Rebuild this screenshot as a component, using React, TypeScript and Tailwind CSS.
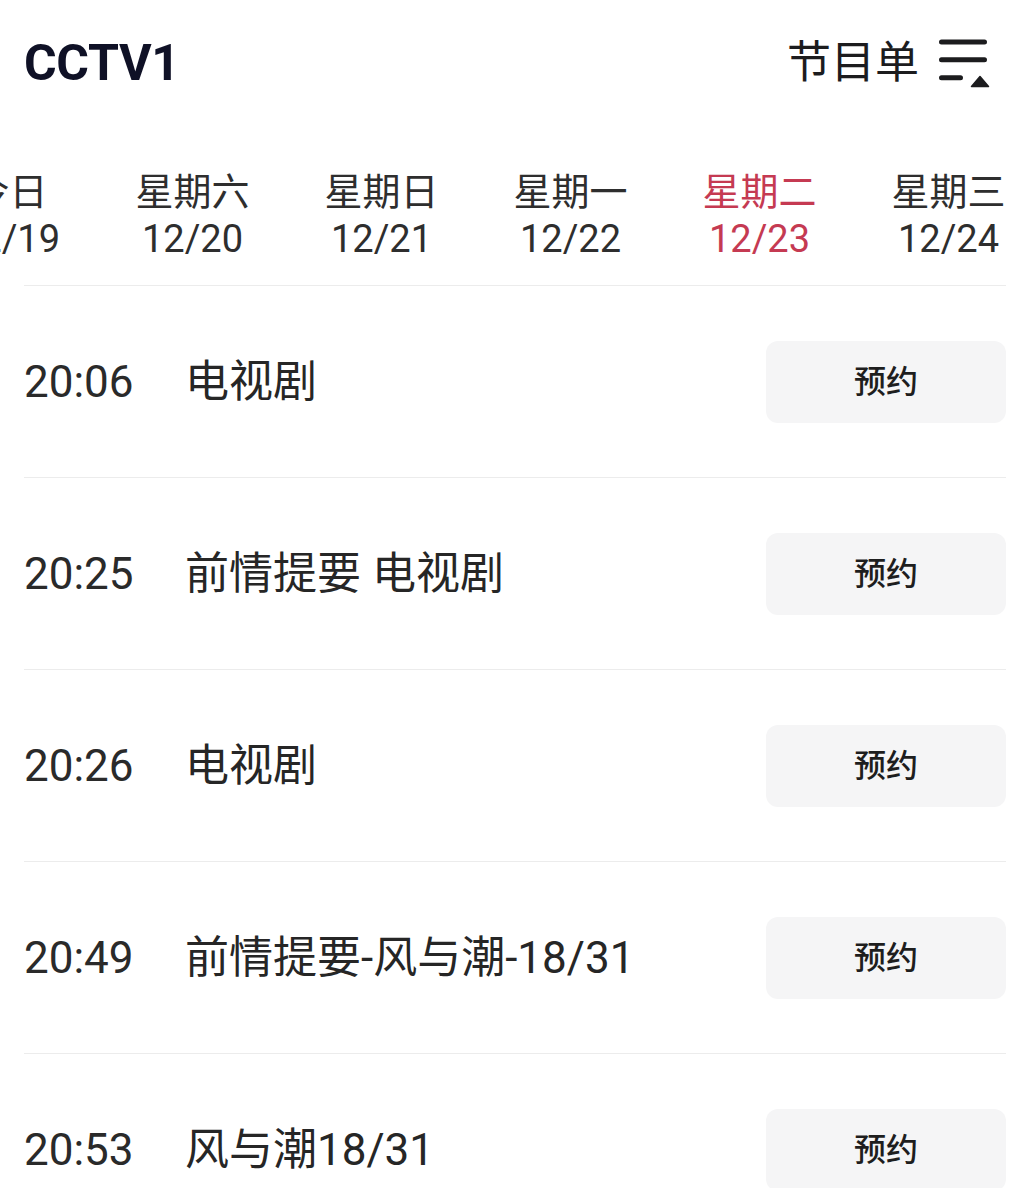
import type { ReactNode } from "react"

type Tab = {
  week: string
  date: string
  width: string
  active?: boolean
}

type Program = {
  time: string
  title: string
}

const tabs: Tab[] = [
  { week: "今日", date: "12/19", width: "w-[177px]" },
  { week: "星期六", date: "12/20", width: "w-[189px]" },
  { week: "星期日", date: "12/21", width: "w-[189px]" },
  { week: "星期一", date: "12/22", width: "w-[189px]" },
  { week: "星期二", date: "12/23", width: "w-[189px]", active: true },
  { week: "星期三", date: "12/24", width: "w-[189px]" },
  { week: "星期四", date: "12/25", width: "w-[189px]" },
]

const programs: Program[] = [
  { time: "20:06", title: "电视剧" },
  { time: "20:25", title: "前情提要 电视剧" },
  { time: "20:26", title: "电视剧" },
  { time: "20:49", title: "前情提要-风与潮-18/31" },
  { time: "20:53", title: "风与潮18/31" },
]

const fontStack = "font-['Roboto','Noto_Sans_CJK_SC',sans-serif]"

function ListIcon() {
  return (
    <svg width="54" height="52" viewBox="0 0 54 52" fill="none" className="shrink-0">
      <path d="M4.5 5H47.5M4.5 22.7H47.5M4.5 40.7H23.5" stroke="#1c1c1e" strokeWidth="5" strokeLinecap="round" />
      <path d="M34.5 49.5L43 39.5L51.5 49.5Z" fill="#1c1c1e" stroke="#1c1c1e" strokeWidth="1.5" strokeLinejoin="round" />
    </svg>
  )
}

function Divider() {
  return <div className="mr-[30px] ml-6 h-px bg-[#ececec]" />
}

function Row({ children }: { children: ReactNode }) {
  return <div className="flex h-[191px] items-center pr-[30px] pl-6">{children}</div>
}

export default function App() {
  return (
    <div className={`h-[1188px] w-[1036px] overflow-hidden bg-white ${fontStack}`}>
      <header className="flex h-[126px] items-center justify-between pr-[45px] pl-6">
        <h1 className="text-[50px] leading-none font-bold tracking-[-0.4px] text-[#0f1126]">CCTV1</h1>
        <div className="flex items-center gap-[18px]">
          <span className="text-[44px] leading-none text-[#1c1c1e]">节目单</span>
          <ListIcon />
        </div>
      </header>

      <div className="overflow-hidden pt-[43px] pb-[22px]">
        <div className="-ml-[79px] flex">
          {tabs.map((tab) => (
            <div
              key={tab.date}
              className={`flex shrink-0 flex-col items-center text-[38px] leading-[47px] ${tab.width} ${
                tab.active ? "text-[#c53a52]" : "text-[#2e2e2e]"
              }`}
            >
              <span>{tab.week}</span>
              <span>{tab.date}</span>
            </div>
          ))}
        </div>
      </div>

      {programs.map((program) => (
        <div key={program.time}>
          <Divider />
          <Row>
            <span className="w-[161px] shrink-0 text-[44px] text-[#2a2a2a]">{program.time}</span>
            <span className="flex-1 text-[44px] whitespace-nowrap text-[#262626]">{program.title}</span>
            <button
              type="button"
              className="flex h-[82px] w-[240px] shrink-0 items-center justify-center rounded-[12px] bg-[#f5f5f6] text-[32px] font-medium text-[#1e1e1e]"
            >
              预约
            </button>
          </Row>
        </div>
      ))}
    </div>
  )
}
